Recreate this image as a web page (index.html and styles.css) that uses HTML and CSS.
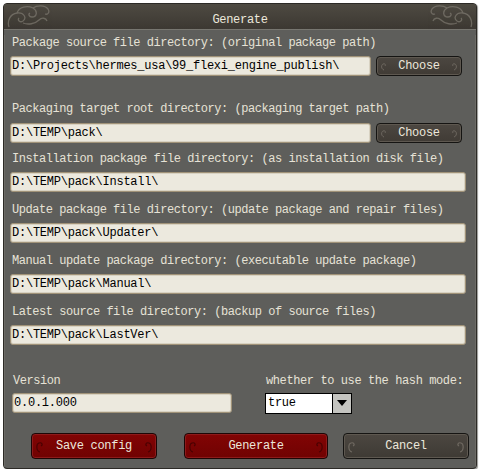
FILE: index.html
```html
<!DOCTYPE html>
<html>
<head>
<meta charset="utf-8">
<link rel="stylesheet" href="styles.css">
</head>
<body>
<div class="window">
  <div class="titlebar">
    <svg class="orn" width="46" height="27" viewBox="0 0 46 27"><path d="M2 24C0 18 3 11 10 10c7-1 10 5 6 8-3 2-6-1-4-3M10 10C12 4 20 2 26 5c5 3 4 9-1 9-3 0-4-3-2-4M26 5c4-3 12-3 15 1 2 3 0 6-3 5M16 20c5 2 12 1 16-3 3-3 7-2 8 1" fill="none" stroke="#8f8a80" stroke-width="1.3"/></svg>
    <span class="title">Generate</span>
    <svg class="orn" width="46" height="27" viewBox="0 0 46 27"><g transform="translate(46 0) scale(-1 1)"><path d="M2 24C0 18 3 11 10 10c7-1 10 5 6 8-3 2-6-1-4-3M10 10C12 4 20 2 26 5c5 3 4 9-1 9-3 0-4-3-2-4M26 5c4-3 12-3 15 1 2 3 0 6-3 5M16 20c5 2 12 1 16-3 3-3 7-2 8 1" fill="none" stroke="#8f8a80" stroke-width="1.3"/></g></svg>
  </div>
  <div class="content">
    <div class="field f1">
      <div class="label">Package source file directory: (original package path)</div>
      <div class="row">
        <div class="input short">D:\Projects\hermes_usa\99_flexi_engine_publish\</div>
        <div class="btn choose"><svg class="curl" width="6" height="10" viewBox="0 0 6 10"><path d="M4 9C1 8 1 4 3 3s3 1 2 2" fill="none" stroke="#6e6860" stroke-width="1"/></svg><span>Choose</span><svg class="curl" width="6" height="10" viewBox="0 0 6 10"><path d="M2 9C5 8 5 4 3 3S0 4 1 5" fill="none" stroke="#6e6860" stroke-width="1"/></svg></div>
      </div>
    </div>
    <div class="field f2">
      <div class="label">Packaging target root directory: (packaging target path)</div>
      <div class="row">
        <div class="input short">D:\TEMP\pack\</div>
        <div class="btn choose"><svg class="curl" width="6" height="10" viewBox="0 0 6 10"><path d="M4 9C1 8 1 4 3 3s3 1 2 2" fill="none" stroke="#6e6860" stroke-width="1"/></svg><span>Choose</span><svg class="curl" width="6" height="10" viewBox="0 0 6 10"><path d="M2 9C5 8 5 4 3 3S0 4 1 5" fill="none" stroke="#6e6860" stroke-width="1"/></svg></div>
      </div>
    </div>
    <div class="field f3">
      <div class="label">Installation package file directory: (as installation disk file)</div>
      <div class="input full">D:\TEMP\pack\Install\</div>
    </div>
    <div class="field f4">
      <div class="label">Update package file directory: (update package and repair files)</div>
      <div class="input full">D:\TEMP\pack\Updater\</div>
    </div>
    <div class="field f4">
      <div class="label">Manual update package directory: (executable update package)</div>
      <div class="input full">D:\TEMP\pack\Manual\</div>
    </div>
    <div class="field f4">
      <div class="label">Latest source file directory: (backup of source files)</div>
      <div class="input full">D:\TEMP\pack\LastVer\</div>
    </div>
    <div class="bottom">
      <div class="ver">
        <div class="label">Version</div>
        <div class="input version">0.0.1.000</div>
      </div>
      <div class="hash">
        <div class="label">whether to use the hash mode:</div>
        <div class="select"><span class="sel-val">true</span><span class="sel-arrow"></span></div>
      </div>
    </div>
    <div class="buttons">
      <div class="btn big red save"><svg class="curl" width="8" height="14" viewBox="0 0 8 14"><path d="M5 13C1 12 1 5 4 4s4 2 2 3" fill="none" stroke="#4a0202" stroke-width="1.2"/></svg><span>Save config</span><svg class="curl" width="8" height="14" viewBox="0 0 8 14"><path d="M3 13C7 12 7 5 4 4S0 6 2 7" fill="none" stroke="#4a0202" stroke-width="1.2"/></svg></div>
      <div class="btn big red gen"><svg class="curl" width="8" height="14" viewBox="0 0 8 14"><path d="M5 13C1 12 1 5 4 4s4 2 2 3" fill="none" stroke="#4a0202" stroke-width="1.2"/></svg><span>Generate</span><svg class="curl" width="8" height="14" viewBox="0 0 8 14"><path d="M3 13C7 12 7 5 4 4S0 6 2 7" fill="none" stroke="#4a0202" stroke-width="1.2"/></svg></div>
      <div class="btn big dark cancel"><svg class="curl" width="8" height="14" viewBox="0 0 8 14"><path d="M5 13C1 12 1 5 4 4s4 2 2 3" fill="none" stroke="#6e6860" stroke-width="1.2"/></svg><span>Cancel</span><svg class="curl" width="8" height="14" viewBox="0 0 8 14"><path d="M3 13C7 12 7 5 4 4S0 6 2 7" fill="none" stroke="#6e6860" stroke-width="1.2"/></svg></div>
    </div>
  </div>
</div>
</body>
</html>
```
FILE: styles.css
```css
html, body { margin: 0; padding: 0; background: #fff; }
body { font-family: "Liberation Mono", "DejaVu Sans Mono", monospace; }
.window {
  margin: 3px 0 0 3px;
  width: 472px;
  height: 464px;
  border: 1px solid #2c2a26;
  border-radius: 4px;
  background: #5e5e5b;
  box-shadow: 1px 1px 1px #9a9a96;
  overflow: hidden;
}
.titlebar {
  box-sizing: border-box;
  height: 26px;
  padding: 0 3px;
  background: linear-gradient(#4e4a42, #3c3832);
  border-bottom: 1px solid #777670;
  display: flex;
  align-items: center;
  justify-content: space-between;
}
.orn { opacity: 0.55; flex: none; }
.title {
  color: #ece8dc;
  font-size: 12px;
  letter-spacing: -0.3px;
  padding-top: 6px;
}
.content {
  padding: 0 0 0 5px;
  border-left: 1px solid #6c6b66;
  border-right: 1px solid #6c6b66;
  height: 438px;
}
.label {
  color: #e6e2d6;
  font-size: 12px;
  letter-spacing: -0.46px;
  line-height: 16px;
  height: 16px;
  padding-left: 2px;
  white-space: nowrap;
}
.input {
  box-sizing: border-box;
  height: 20px;
  background: #ece9de;
  border: 1px solid #a09278;
  border-radius: 3px;
  box-shadow: inset 0 0 0 1px #d8d2c2;
  color: #000;
  font-size: 12px;
  letter-spacing: -0.24px;
  line-height: 18px;
  padding-left: 1px;
  white-space: nowrap;
  overflow: hidden;
}
.row { display: flex; gap: 5px; }
.short { width: 361px; }
.full { width: 456px; }
.field { display: flex; flex-direction: column; }
.f1 { margin-top: 5px; gap: 5px; }
.f2 { margin-top: 25px; gap: 6px; }
.f3 { margin-top: 8px; gap: 5px; }
.f4 { margin-top: 10px; gap: 5px; }
.btn {
  box-sizing: border-box;
  display: flex;
  align-items: center;
  justify-content: space-between;
  padding: 0 3px;
  color: #ece8dc;
  font-size: 12px;
  letter-spacing: -0.3px;
  border: 1px solid #151412;
  border-radius: 4px;
}
.curl { flex: none; }
.choose {
  width: 86px;
  height: 20px;
  background: linear-gradient(#4c4741, #403b35);
  box-shadow: inset 0 0 0 1px #5e5850;
}
.bottom {
  display: flex;
  margin-top: 28px;
}
.ver { width: 253px; display: flex; flex-direction: column; gap: 4px; padding-left: 2px; }
.ver .label { padding-left: 1px; }
.version { width: 220px; }
.hash { display: flex; flex-direction: column; gap: 4px; }
.hash .label { padding-left: 1px; letter-spacing: -0.4px; }
.select {
  box-sizing: border-box;
  width: 87px;
  height: 21px;
  background: #fff;
  border: 1px solid #000;
  display: flex;
}
.sel-val {
  flex: 1;
  font-size: 12px;
  letter-spacing: -0.3px;
  line-height: 19px;
  padding-left: 2px;
  color: #000;
}
.sel-arrow {
  width: 18px;
  background: #c4c4c0;
  border-left: 1px solid #000;
  position: relative;
}
.sel-arrow::after {
  content: "";
  position: absolute;
  left: 4px;
  top: 6px;
  border-left: 5px solid transparent;
  border-right: 5px solid transparent;
  border-top: 6px solid #000;
}
.buttons {
  display: flex;
  margin-top: 19px;
  padding-left: 21px;
}
.big {
  height: 26px;
  width: 126px;
  font-size: 12px;
}
.red {
  background: linear-gradient(#820404, #700202);
  border-color: #1e0606;
  box-shadow: inset 0 0 0 1px #8e1a1a;
}
.dark {
  background: linear-gradient(#4c4741, #3e3a34);
  box-shadow: inset 0 0 0 1px #5e5850;
}
.gen { width: 144px; margin-left: 27px; }
.cancel { margin-left: 15px; }
```
